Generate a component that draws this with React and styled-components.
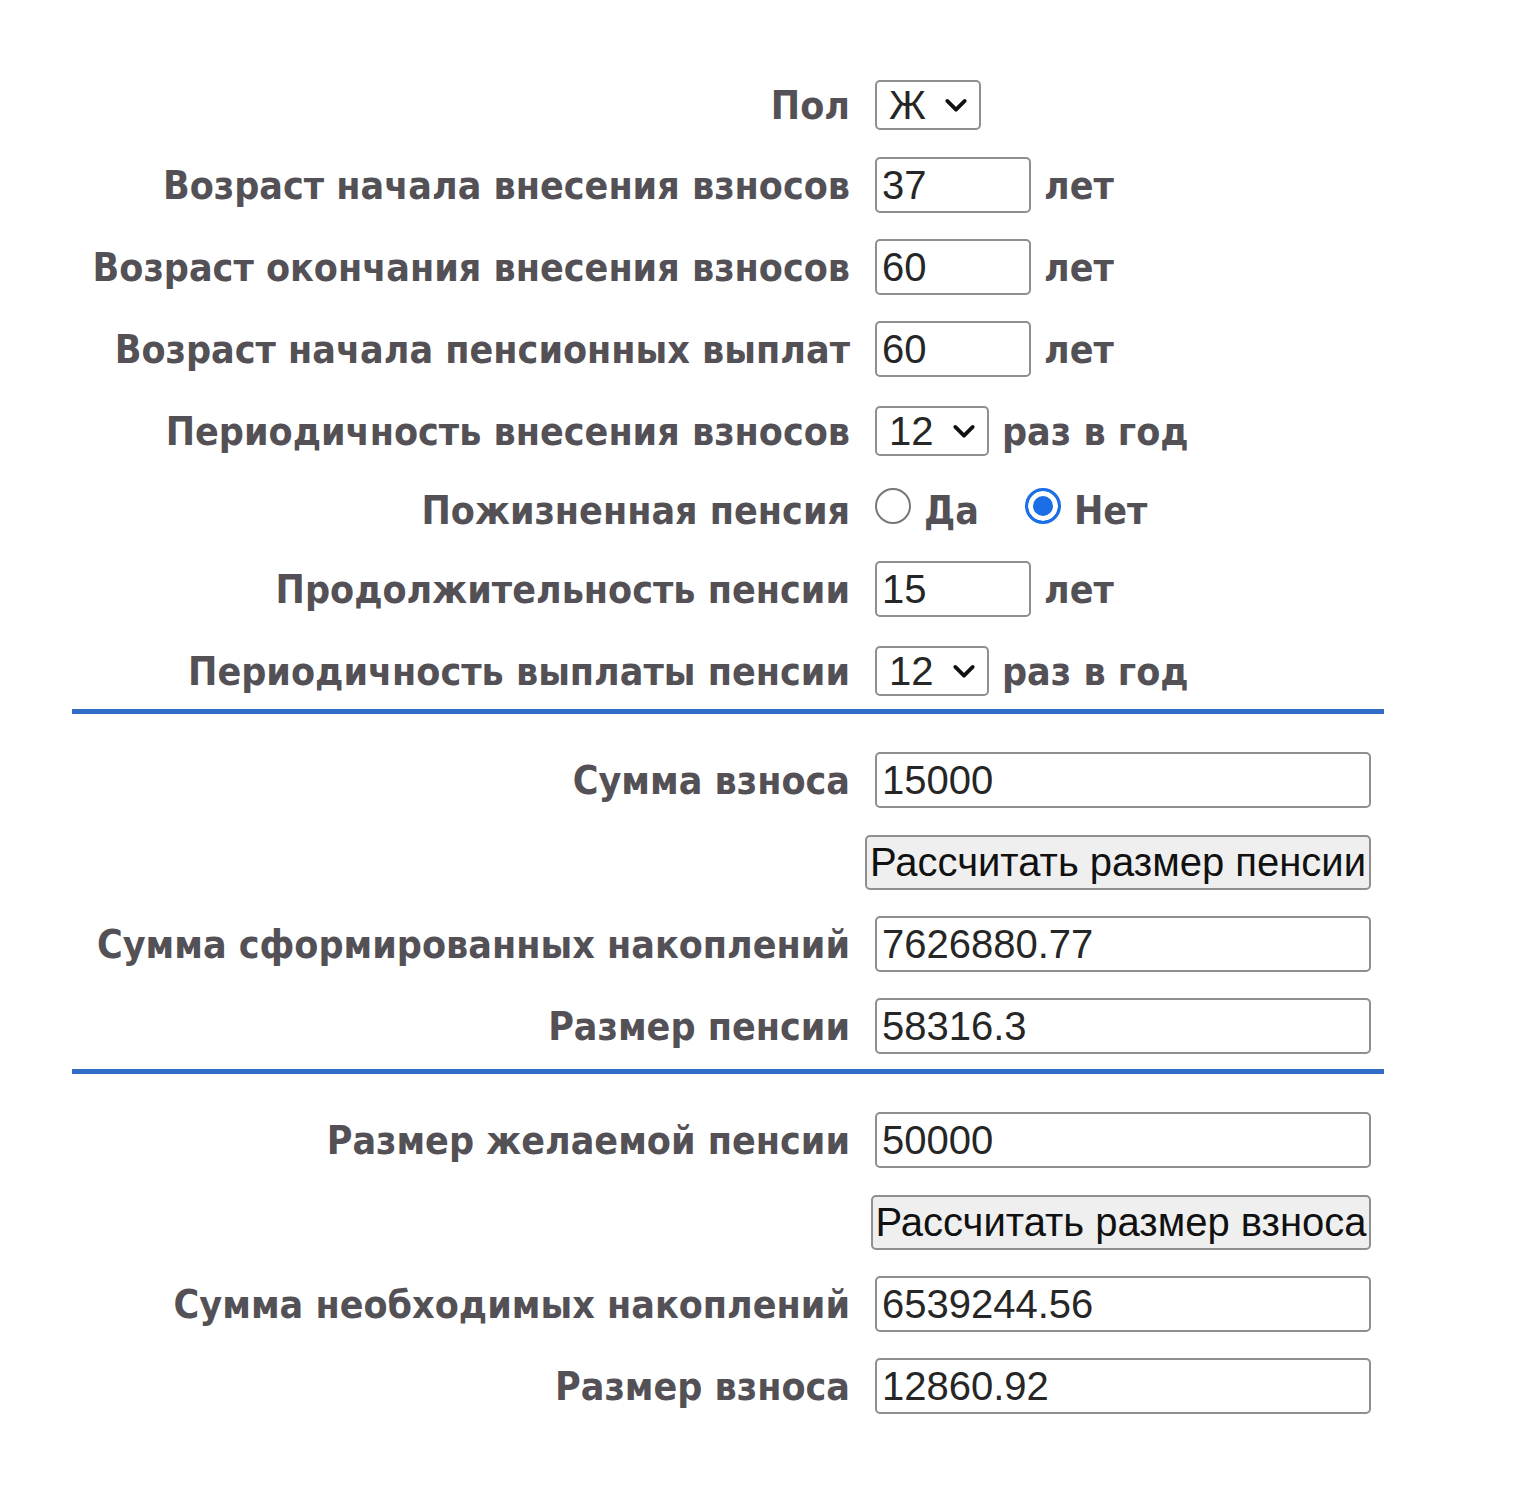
import React from "react";
import styled, { createGlobalStyle } from "styled-components";

const GlobalStyle = createGlobalStyle`
  body {
    margin: 0;
    background: #fff;
  }
`;

export default function App() {
  return (
    <>
      <GlobalStyle />
      <Page>
        <Row $h={78}>
          <Label>Пол</Label>
          <Control>
            <SelectBox $w={106}>
              <select defaultValue="Ж">
                <option>Ж</option>
                <option>М</option>
              </select>
              <Chevron />
            </SelectBox>
          </Control>
        </Row>
        <Row>
          <Label>Возраст начала внесения взносов</Label>
          <Control>
            <Field defaultValue="37" />
            <Unit>лет</Unit>
          </Control>
        </Row>
        <Row>
          <Label>Возраст окончания внесения взносов</Label>
          <Control>
            <Field defaultValue="60" />
            <Unit>лет</Unit>
          </Control>
        </Row>
        <Row>
          <Label>Возраст начала пенсионных выплат</Label>
          <Control>
            <Field defaultValue="60" />
            <Unit>лет</Unit>
          </Control>
        </Row>
        <Row>
          <Label>Периодичность внесения взносов</Label>
          <Control>
            <SelectBox $w={114}>
              <select defaultValue="12">
                <option>1</option>
                <option>4</option>
                <option>12</option>
              </select>
              <Chevron />
            </SelectBox>
            <Unit>раз в год</Unit>
          </Control>
        </Row>
        <Row $h={76}>
          <Label>Пожизненная пенсия</Label>
          <Control>
            <Radio type="radio" name="life" />
            <Unit>Да</Unit>
            <Radio type="radio" name="life" defaultChecked $spaced />
            <Unit>Нет</Unit>
          </Control>
        </Row>
        <Row>
          <Label>Продолжительность пенсии</Label>
          <Control>
            <Field defaultValue="15" />
            <Unit>лет</Unit>
          </Control>
        </Row>
        <Row>
          <Label>Периодичность выплаты пенсии</Label>
          <Control>
            <SelectBox $w={114}>
              <select defaultValue="12">
                <option>1</option>
                <option>4</option>
                <option>12</option>
              </select>
              <Chevron />
            </SelectBox>
            <Unit>раз в год</Unit>
          </Control>
        </Row>

        <Divider $top={-3} />

        <Row>
          <Label>Сумма взноса</Label>
          <Control>
            <Field $wide defaultValue="15000" />
          </Control>
        </Row>
        <Row>
          <span />
          <ButtonCell>
            <Button $w={506}>Рассчитать размер пенсии</Button>
          </ButtonCell>
        </Row>
        <Row>
          <Label>Сумма сформированных накоплений</Label>
          <Control>
            <Field $wide defaultValue="7626880.77" />
          </Control>
        </Row>
        <Row>
          <Label>Размер пенсии</Label>
          <Control>
            <Field $wide defaultValue="58316.3" />
          </Control>
        </Row>

        <Divider $top={2} />

        <Row>
          <Label>Размер желаемой пенсии</Label>
          <Control>
            <Field $wide defaultValue="50000" />
          </Control>
        </Row>
        <Row>
          <span />
          <ButtonCell>
            <Button $w={500}>Рассчитать размер взноса</Button>
          </ButtonCell>
        </Row>
        <Row>
          <Label>Сумма необходимых накоплений</Label>
          <Control>
            <Field $wide defaultValue="6539244.56" />
          </Control>
        </Row>
        <Row>
          <Label>Размер взноса</Label>
          <Control>
            <Field $wide defaultValue="12860.92" />
          </Control>
        </Row>
      </Page>
    </>
  );
}

function Chevron() {
  return (
    <ChevronIcon viewBox="0 0 24 24" width="28" height="28">
      <path d="M4.5 8.5l7.5 7.5 7.5-7.5" fill="none" stroke="#111" strokeWidth="3.2" strokeLinecap="round" strokeLinejoin="round" />
    </ChevronIcon>
  );
}

const Page = styled.div`
  width: 1312px;
  padding: 66px 0 60px 72px;
`;

const Row = styled.div`
  display: grid;
  grid-template-columns: 778px 496px;
  column-gap: 25px;
  align-items: center;
  height: ${(p) => p.$h || 82}px;
`;

const Label = styled.div`
  text-align: right;
  white-space: nowrap;
  font-family: "DejaVu Sans Condensed", "DejaVu Sans", sans-serif;
  font-weight: 700;
  font-size: 39px;
  color: #545156;
`;

const Control = styled.div`
  display: flex;
  align-items: center;
`;

const ButtonCell = styled.div`
  display: flex;
  justify-content: flex-end;
`;

const Unit = styled.span`
  margin-left: 13px;
  white-space: nowrap;
  font-family: "DejaVu Sans Condensed", "DejaVu Sans", sans-serif;
  font-weight: 700;
  font-size: 39px;
  color: #545156;
`;

const Field = styled.input`
  box-sizing: border-box;
  width: ${(p) => (p.$wide ? 496 : 156)}px;
  height: 56px;
  margin: 0;
  padding: 0 5px;
  border: 2px solid #8f8f8f;
  border-radius: 5px;
  background: #fff;
  font-family: "Liberation Sans", Arial, sans-serif;
  font-size: 40px;
  color: #262626;
  outline: none;
`;

const SelectBox = styled.div`
  position: relative;
  width: ${(p) => p.$w}px;
  height: 50px;

  select {
    appearance: none;
    box-sizing: border-box;
    width: 100%;
    height: 100%;
    margin: 0;
    padding: 0 0 0 12px;
    border: 2px solid #8f8f8f;
    border-radius: 5px;
    background: #fff;
    font-family: "Liberation Sans", Arial, sans-serif;
    font-size: 40px;
    color: #262626;
    outline: none;
  }
`;

const ChevronIcon = styled.svg`
  position: absolute;
  right: 11px;
  top: 50%;
  transform: translateY(-50%);
  pointer-events: none;
`;

const Radio = styled.input`
  appearance: none;
  box-sizing: border-box;
  width: 36px;
  height: 36px;
  margin: -8px 0 0 ${(p) => (p.$spaced ? 46 : 0)}px;
  border: 2.5px solid #777;
  border-radius: 50%;
  background: #fff;

  &:checked {
    border: 3px solid #1a6fe6;
    background: #1a6fe6;
    box-shadow: inset 0 0 0 5px #fff;
  }
`;

const Divider = styled.div`
  width: 1312px;
  height: 5px;
  margin: ${(p) => p.$top}px 0 25px;
  background: #2f6ec4;
`;

const Button = styled.button`
  box-sizing: border-box;
  width: ${(p) => p.$w}px;
  height: 55px;
  margin: 0;
  padding: 0;
  flex-shrink: 0;
  border: 2px solid #8f8f8f;
  border-radius: 5px;
  background: #efefef;
  font-family: "Liberation Sans", Arial, sans-serif;
  font-size: 40px;
  color: #111;
  white-space: nowrap;
`;
